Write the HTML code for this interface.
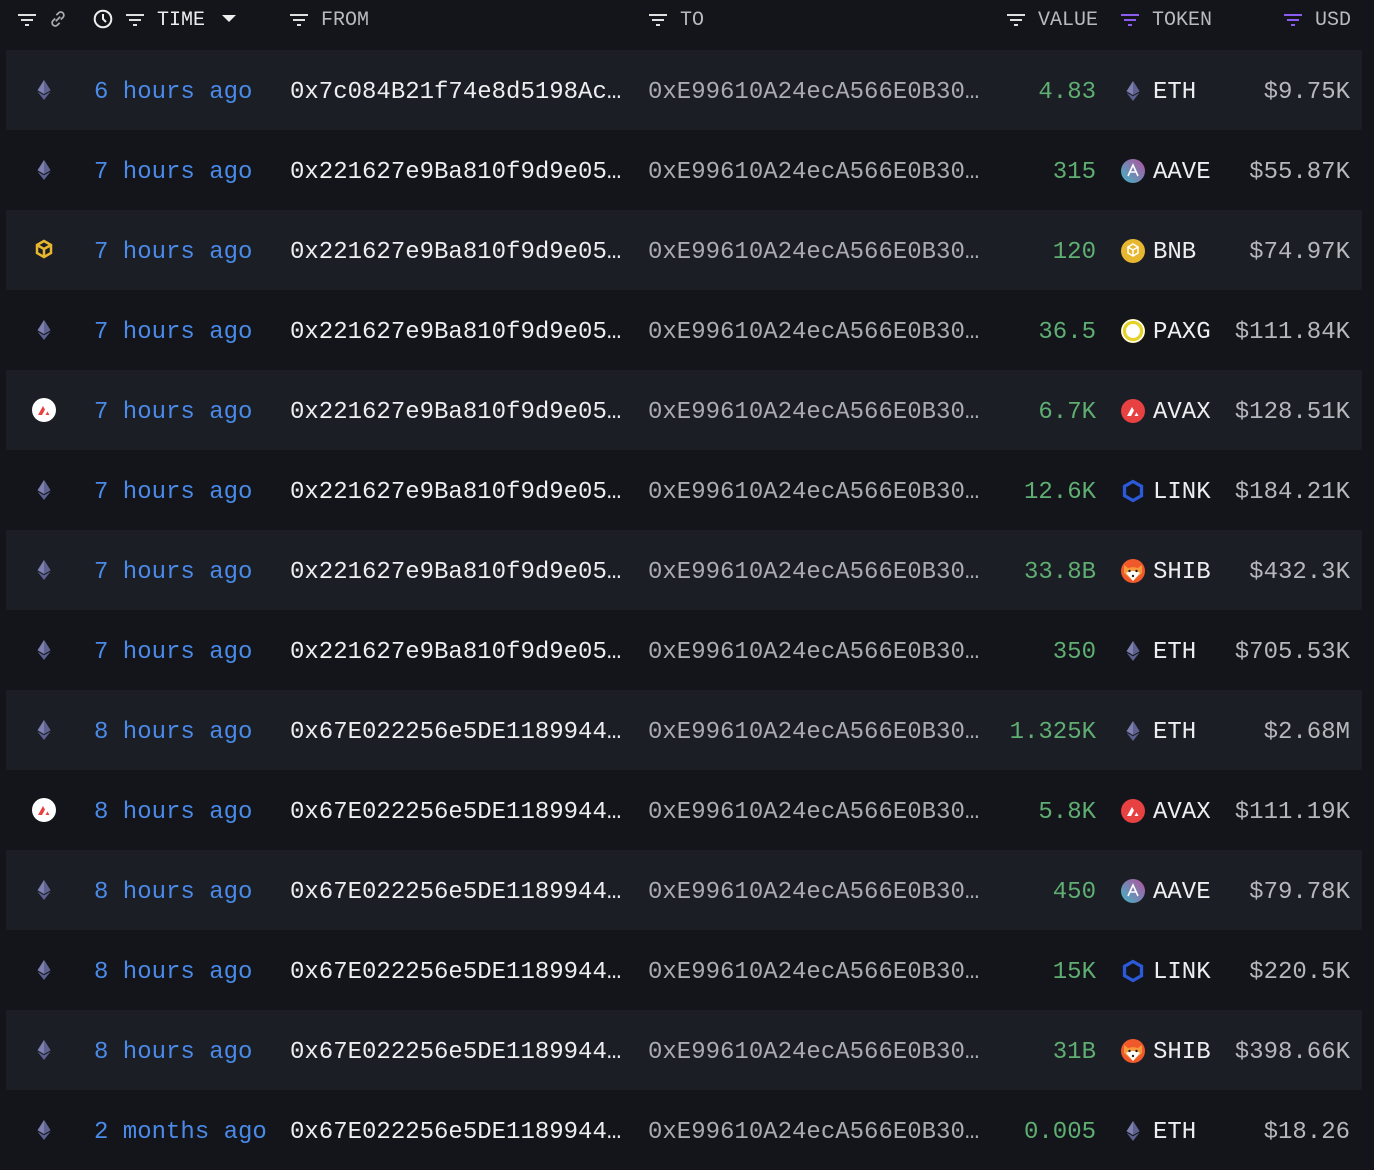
<!DOCTYPE html>
<html><head><meta charset="utf-8">
<style>
*{margin:0;padding:0;box-sizing:border-box}
body{width:1374px;height:1152px;background:#13151b;font-family:"Liberation Mono",monospace;overflow:hidden;position:relative}
.hd{position:absolute;top:0;left:0;width:1374px;height:40px;font-size:20px;color:#b8bac0}
.hd span,.hd svg{position:absolute}
.row{position:absolute;left:6px;width:1356px;height:80px;font-size:24px}
.row.a{background:#1b1e25}
.row>*{position:absolute;top:0;line-height:80px;padding-top:5px;line-height:75px;white-space:nowrap}
.t{left:88px;color:#4a8ae8}
.f{left:284px;color:#eceef0}
.to{left:642px;color:#a9abb0}
.v{right:266px;color:#5fae72}
.tk{left:1147px;color:#eceef0}
.u{right:12px;color:#b5b7bb}
.row svg.ci{left:26px;top:28px;width:24px;height:24px;padding:0}
.row svg.ti{left:1115px;top:29px;width:24px;height:24px;padding:0}
</style></head><body>
<svg width="0" height="0" style="position:absolute">
<defs>
<symbol id="eth" viewBox="0 0 24 24"><path d="M12 2L5.5 12.3 12 16 18.5 12.3z" fill="#7e80b0"/><path d="M12 17.3L5.5 13.6 12 22 18.5 13.6z" fill="#5d6090"/><path d="M12 2v14l6.5-3.7z" fill="#5f628e"/></symbol>
<symbol id="aave" viewBox="0 0 24 24"><defs><linearGradient id="ag" x1="0" y1="1" x2="1" y2="0"><stop offset="0" stop-color="#3fb5c4"/><stop offset="1" stop-color="#b6509e"/></linearGradient></defs><circle cx="12" cy="12" r="12" fill="url(#ag)"/><path d="M7 17L12 6l5 11M9 13h6" stroke="#fff" stroke-width="1.6" fill="none"/></symbol>
<symbol id="bnb" viewBox="0 0 24 24"><circle cx="12" cy="12" r="12" fill="#e8b730"/><path d="M12 5l5 3v6l-5 3-5-3V8z M7 8l5 3 5-3 M12 11v6" stroke="#fff" stroke-width="1.5" fill="none"/></symbol>
<symbol id="bnbc" viewBox="0 0 24 24"><path d="M12 3l7 4v8l-7 4-7-4V7z M5 7l7 4 7-4 M12 11v8" stroke="#e8b730" stroke-width="2.5" fill="none"/></symbol>
<symbol id="paxg" viewBox="0 0 24 24"><circle cx="12" cy="12" r="12" fill="#e6d22a"/><circle cx="12" cy="12" r="7" fill="#fff"/><circle cx="12" cy="12" r="11" fill="none" stroke="#fff" stroke-width="1.5"/></symbol>
<symbol id="avax" viewBox="0 0 24 24"><circle cx="12" cy="12" r="12" fill="#e84142"/><path d="M6 17L11 8l2 3.5L10 17z M13.5 17l2-3.5 2 3.5z" fill="#fff"/></symbol>
<symbol id="avaxc" viewBox="0 0 24 24"><circle cx="12" cy="12" r="12" fill="#fff"/><path d="M6 17L11 8l2 3.5L10 17z M13.5 17l2-3.5 2 3.5z" fill="#e84142"/></symbol>
<symbol id="link" viewBox="0 0 24 24"><path d="M12 2.5l8.5 4.8v9.4L12 21.5l-8.5-4.8V7.3z" fill="none" stroke="#2a5ada" stroke-width="3.3"/></symbol>
<symbol id="shib" viewBox="0 0 24 24"><circle cx="12" cy="12" r="12" fill="#f0592a"/><path d="M3 6l4 3 5-1 5 1 4-3 0 8-9 8-9-8z" fill="#f79a3e"/><path d="M5 14q7-4 14 0l-7 8z" fill="#fff"/><circle cx="8.5" cy="12" r="1.2" fill="#222"/><circle cx="15.5" cy="12" r="1.2" fill="#222"/><circle cx="12" cy="17" r="1.2" fill="#222"/></symbol>
<symbol id="flt" viewBox="0 0 20 14"><path d="M1 2h18M4 7h12M8 12h4" stroke="currentColor" stroke-width="2"/></symbol>
</defs></svg>

<div class="hd">
<svg style="left:17px;top:13px;color:#e0e0e0" width="20" height="14"><use href="#flt" width="20" height="14"/></svg>
<svg style="left:47px;top:8px" width="22" height="22" viewBox="0 0 20 20"><path d="M8 12l4-4M7.5 9.5l-2 2a2.8 2.8 0 004 4l2-2M12.5 10.5l2-2a2.8 2.8 0 00-4-4l-2 2" stroke="#a8aab0" stroke-width="1.6" fill="none"/></svg>
<svg style="left:93px;top:9px" width="20" height="20" viewBox="0 0 20 20"><circle cx="10" cy="10" r="8.3" fill="none" stroke="#eee" stroke-width="2"/><path d="M10 5v5l3 3" stroke="#eee" stroke-width="2" fill="none"/></svg>
<svg style="left:125px;top:13px;color:#e0e0e0" width="20" height="14"><use href="#flt" width="20" height="14"/></svg>
<span style="left:157px;top:9px;color:#eceef0">TIME</span>
<svg style="left:222px;top:15px" width="14" height="8"><path d="M0 0h14L7 7z" fill="#eee"/></svg>
<svg style="left:289px;top:13px;color:#e0e0e0" width="20" height="14"><use href="#flt" width="20" height="14"/></svg>
<span style="left:321px;top:9px">FROM</span>
<svg style="left:648px;top:13px;color:#e0e0e0" width="20" height="14"><use href="#flt" width="20" height="14"/></svg>
<span style="left:680px;top:9px">TO</span>
<svg style="left:1006px;top:13px;color:#e0e0e0" width="20" height="14"><use href="#flt" width="20" height="14"/></svg>
<span style="left:1038px;top:9px">VALUE</span>
<svg style="left:1120px;top:13px;color:#8a5cf0" width="20" height="14"><use href="#flt" width="20" height="14"/></svg>
<span style="left:1152px;top:9px">TOKEN</span>
<svg style="left:1283px;top:13px;color:#8a5cf0" width="20" height="14"><use href="#flt" width="20" height="14"/></svg>
<span style="left:1315px;top:9px">USD</span>
</div>

<div class="row a" style="top:50px"><svg class="ci"><use href="#eth" width="24" height="24"/></svg><span class="t">6 hours ago</span><span class="f">0x7c084B21f74e8d5198Ac…</span><span class="to">0xE99610A24ecA566E0B30…</span><span class="v">4.83</span><svg class="ti"><use href="#eth" width="24" height="24"/></svg><span class="tk">ETH</span><span class="u">$9.75K</span></div>
<div class="row" style="top:130px"><svg class="ci"><use href="#eth" width="24" height="24"/></svg><span class="t">7 hours ago</span><span class="f">0x221627e9Ba810f9d9e05…</span><span class="to">0xE99610A24ecA566E0B30…</span><span class="v">315</span><svg class="ti"><use href="#aave" width="24" height="24"/></svg><span class="tk">AAVE</span><span class="u">$55.87K</span></div>
<div class="row a" style="top:210px"><svg class="ci"><use href="#bnbc" width="24" height="24"/></svg><span class="t">7 hours ago</span><span class="f">0x221627e9Ba810f9d9e05…</span><span class="to">0xE99610A24ecA566E0B30…</span><span class="v">120</span><svg class="ti"><use href="#bnb" width="24" height="24"/></svg><span class="tk">BNB</span><span class="u">$74.97K</span></div>
<div class="row" style="top:290px"><svg class="ci"><use href="#eth" width="24" height="24"/></svg><span class="t">7 hours ago</span><span class="f">0x221627e9Ba810f9d9e05…</span><span class="to">0xE99610A24ecA566E0B30…</span><span class="v">36.5</span><svg class="ti"><use href="#paxg" width="24" height="24"/></svg><span class="tk">PAXG</span><span class="u">$111.84K</span></div>
<div class="row a" style="top:370px"><svg class="ci"><use href="#avaxc" width="24" height="24"/></svg><span class="t">7 hours ago</span><span class="f">0x221627e9Ba810f9d9e05…</span><span class="to">0xE99610A24ecA566E0B30…</span><span class="v">6.7K</span><svg class="ti"><use href="#avax" width="24" height="24"/></svg><span class="tk">AVAX</span><span class="u">$128.51K</span></div>
<div class="row" style="top:450px"><svg class="ci"><use href="#eth" width="24" height="24"/></svg><span class="t">7 hours ago</span><span class="f">0x221627e9Ba810f9d9e05…</span><span class="to">0xE99610A24ecA566E0B30…</span><span class="v">12.6K</span><svg class="ti"><use href="#link" width="24" height="24"/></svg><span class="tk">LINK</span><span class="u">$184.21K</span></div>
<div class="row a" style="top:530px"><svg class="ci"><use href="#eth" width="24" height="24"/></svg><span class="t">7 hours ago</span><span class="f">0x221627e9Ba810f9d9e05…</span><span class="to">0xE99610A24ecA566E0B30…</span><span class="v">33.8B</span><svg class="ti"><use href="#shib" width="24" height="24"/></svg><span class="tk">SHIB</span><span class="u">$432.3K</span></div>
<div class="row" style="top:610px"><svg class="ci"><use href="#eth" width="24" height="24"/></svg><span class="t">7 hours ago</span><span class="f">0x221627e9Ba810f9d9e05…</span><span class="to">0xE99610A24ecA566E0B30…</span><span class="v">350</span><svg class="ti"><use href="#eth" width="24" height="24"/></svg><span class="tk">ETH</span><span class="u">$705.53K</span></div>
<div class="row a" style="top:690px"><svg class="ci"><use href="#eth" width="24" height="24"/></svg><span class="t">8 hours ago</span><span class="f">0x67E022256e5DE1189944…</span><span class="to">0xE99610A24ecA566E0B30…</span><span class="v">1.325K</span><svg class="ti"><use href="#eth" width="24" height="24"/></svg><span class="tk">ETH</span><span class="u">$2.68M</span></div>
<div class="row" style="top:770px"><svg class="ci"><use href="#avaxc" width="24" height="24"/></svg><span class="t">8 hours ago</span><span class="f">0x67E022256e5DE1189944…</span><span class="to">0xE99610A24ecA566E0B30…</span><span class="v">5.8K</span><svg class="ti"><use href="#avax" width="24" height="24"/></svg><span class="tk">AVAX</span><span class="u">$111.19K</span></div>
<div class="row a" style="top:850px"><svg class="ci"><use href="#eth" width="24" height="24"/></svg><span class="t">8 hours ago</span><span class="f">0x67E022256e5DE1189944…</span><span class="to">0xE99610A24ecA566E0B30…</span><span class="v">450</span><svg class="ti"><use href="#aave" width="24" height="24"/></svg><span class="tk">AAVE</span><span class="u">$79.78K</span></div>
<div class="row" style="top:930px"><svg class="ci"><use href="#eth" width="24" height="24"/></svg><span class="t">8 hours ago</span><span class="f">0x67E022256e5DE1189944…</span><span class="to">0xE99610A24ecA566E0B30…</span><span class="v">15K</span><svg class="ti"><use href="#link" width="24" height="24"/></svg><span class="tk">LINK</span><span class="u">$220.5K</span></div>
<div class="row a" style="top:1010px"><svg class="ci"><use href="#eth" width="24" height="24"/></svg><span class="t">8 hours ago</span><span class="f">0x67E022256e5DE1189944…</span><span class="to">0xE99610A24ecA566E0B30…</span><span class="v">31B</span><svg class="ti"><use href="#shib" width="24" height="24"/></svg><span class="tk">SHIB</span><span class="u">$398.66K</span></div>
<div class="row" style="top:1090px"><svg class="ci"><use href="#eth" width="24" height="24"/></svg><span class="t">2 months ago</span><span class="f">0x67E022256e5DE1189944…</span><span class="to">0xE99610A24ecA566E0B30…</span><span class="v">0.005</span><svg class="ti"><use href="#eth" width="24" height="24"/></svg><span class="tk">ETH</span><span class="u">$18.26</span></div>
</body></html>
